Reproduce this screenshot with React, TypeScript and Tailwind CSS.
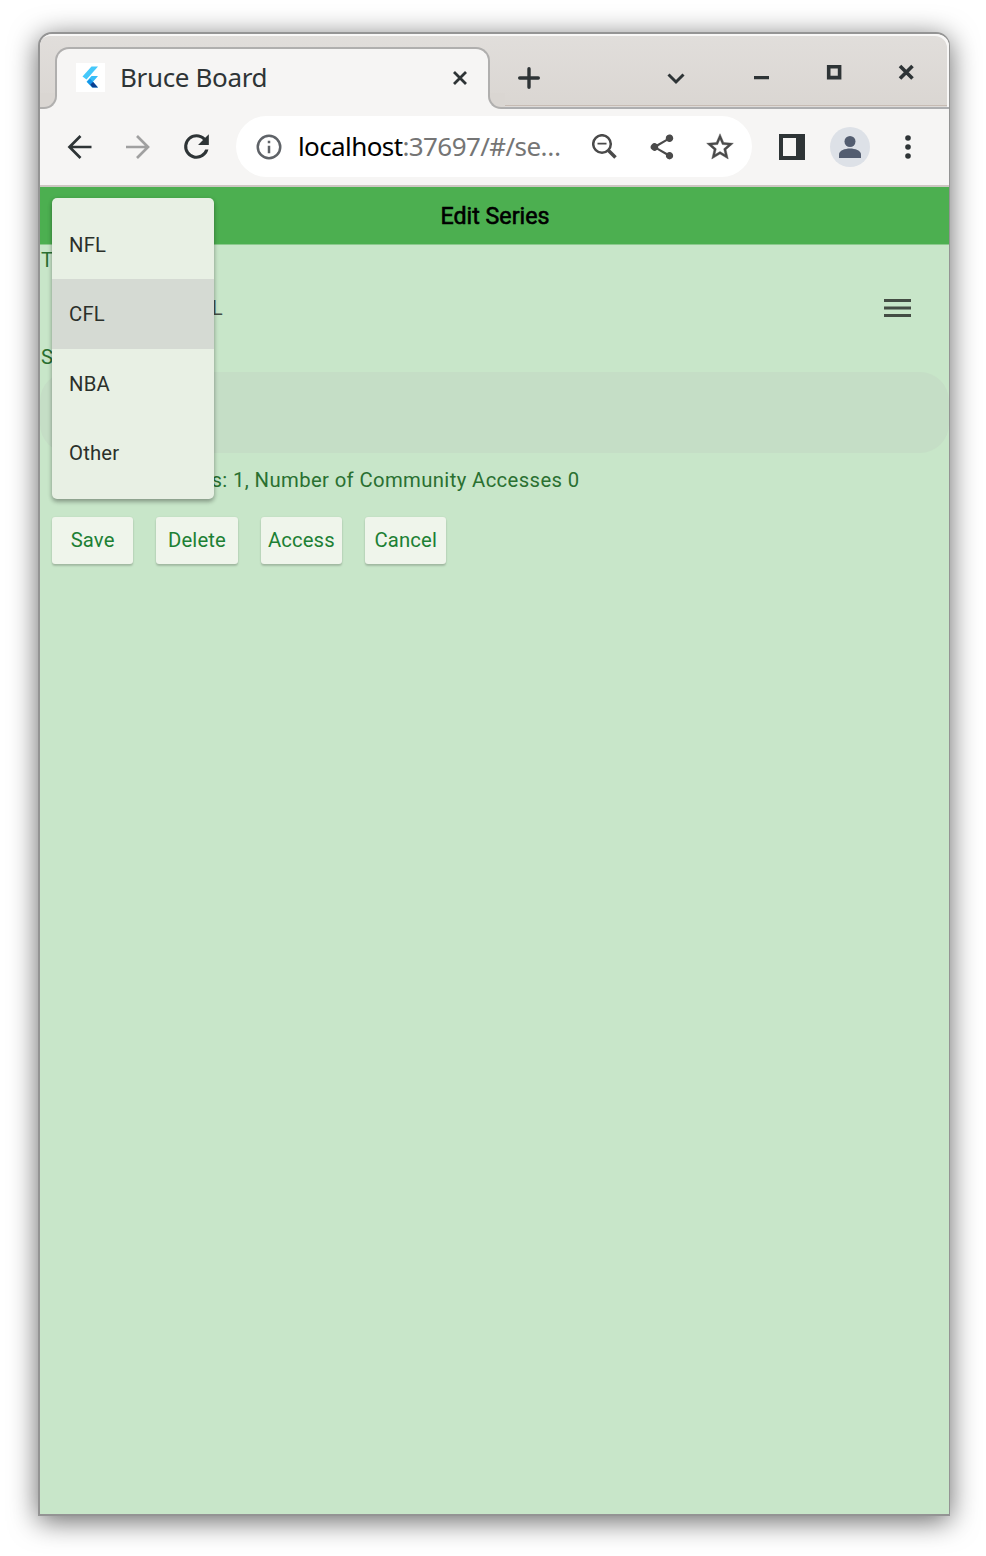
import type { ReactNode } from "react";

function Icon({ size, className, children }: { size: number; className?: string; children: ReactNode }) {
  return (
    <svg width={size} height={size} viewBox="0 0 24 24" fill="currentColor" className={`shrink-0 ${className ?? ""}`}>
      {children}
    </svg>
  );
}

function FlutterLogo() {
  return (
    <svg width="29" height="29" viewBox="0 0 29 29" className="shrink-0 bg-white">
      <path d="M15.500 3.500H22L10.500 16.500 6.500 13.500z" fill="#45c8fa" />
      <path d="M15.500 13H22L17 18.700 22 24.500H16L10.500 18.700z" fill="#38bdf8" />
      <path d="M14 21.500L17 18.700 22 24.500H16.500z" fill="#0b3f91" />
      <path d="M11 18.700l3-3 3 3-3 3z" fill="#1695e8" />
    </svg>
  );
}

function TabStrip() {
  return (
    <div className="relative flex h-[75px] shrink-0 items-start rounded-t-[12px] border-b-2 border-[#adaeb0] bg-linear-to-b from-[#e1dedb] to-[#dad6d2] pl-[15px] pt-[14px] text-[#2e3436] shadow-[inset_-2px_2px_0_#f8f7f6,inset_0_-1px_0_#dedad7,inset_0_-2px_0_#c6bbb3]">
      <div className="relative -mt-px flex h-[62px] w-[435px] shrink-0 items-center rounded-t-[14px] border-2 border-b-0 border-[#b0afae] bg-[#f6f5f4] pb-[3px] pl-[19px] pr-[18px]">
        <span className="absolute -left-[17px] bottom-0 h-[16px] w-[17px] bg-[#f6f5f4]">
          <span className="block h-full w-full rounded-br-[13px] border-b-2 border-r-2 border-[#b0afae] bg-[#dad6d2]" />
        </span>
        <span className="absolute -right-[17px] bottom-0 h-[16px] w-[17px] bg-[#f6f5f4]">
          <span className="block h-full w-full rounded-bl-[13px] border-b-2 border-l-2 border-[#b0afae] bg-[#dad6d2]" />
        </span>
        <FlutterLogo />
        <span className="ml-[15px] flex-1 whitespace-nowrap pb-[2px] text-[26px] leading-none tracking-[-0.35px]">Bruce Board</span>
        <svg width="20" height="20" viewBox="0 0 20 20" className="stroke-current">
          <path d="M4 4l12 12M16 4L4 16" strokeWidth="2.800" />
        </svg>
      </div>
      <svg width="24" height="24" viewBox="0 0 24 24" className="ml-[27px] mt-[18px] shrink-0 stroke-current">
        <path d="M12 2.700v18.600M2.700 12h18.600" strokeWidth="3.400" strokeLinecap="round" />
      </svg>
      <svg width="20" height="20" viewBox="0 0 20 20" fill="none" className="ml-[125px] mt-[20px] shrink-0 stroke-current">
        <path d="M2.500 6.500L10 14l7.500-7.500" strokeWidth="3" />
      </svg>
      <svg width="16" height="16" viewBox="0 0 16 16" className="ml-[67px] mt-[16px] shrink-0 fill-current">
        <path d="M1 12h15v3.200H1z" />
      </svg>
      <svg width="16" height="16" viewBox="0 0 16 16" fill="none" className="ml-[57px] mt-[16px] shrink-0 stroke-current">
        <path d="M2.700 2.700h10.900v10.900H2.700z" strokeWidth="3.600" />
      </svg>
      <svg width="16" height="16" viewBox="0 0 16 16" className="ml-[56px] mt-[16px] shrink-0 stroke-current">
        <path d="M2 2l12.500 12.500M14.500 2L2 14.500" strokeWidth="3.600" />
      </svg>
    </div>
  );
}

function Toolbar() {
  return (
    <div className="flex h-[78px] shrink-0 items-center border-b-2 border-[#cdc7c2] bg-[#f6f5f4] pb-px pl-[23px] text-[#2e3436]">
      <svg width="34" height="26" viewBox="0 0 34 26" fill="none" stroke="currentColor" strokeWidth="2.700" className="shrink-0">
        <path d="M28.500 13H7.500M17.500 2L6.500 13l11 11" />
      </svg>
      <svg width="34" height="26" viewBox="0 0 34 26" fill="none" stroke="currentColor" strokeWidth="2.700" className="ml-[24px] shrink-0 text-[#a0a0a0]">
        <path d="M5 13h21M16 2l11 11-11 11" />
      </svg>
      <Icon size={37} className="ml-[23px]">
        <path d="M17.65 6.35A7.96 7.96 0 0 0 12 4a8 8 0 1 0 7.730 10h-2.080A6 6 0 1 1 12 6c1.660 0 3.140.690 4.220 1.780L13 11h7V4z" />
      </Icon>
      <div className="ml-[21px] flex h-[61px] w-[516px] shrink-0 items-center rounded-full bg-white pl-[18px] text-[#4a4a4a]">
        <Icon size={30} className="text-[#5f6368]">
          <path d="M11 7h2v2h-2zm0 4h2v6h-2zm1-9a10 10 0 1 0 0 20 10 10 0 0 0 0-20zm0 18a8 8 0 1 1 0-16 8 8 0 0 1 0 16z" />
        </Icon>
        <span className="ml-[14px] w-[264px] shrink-0 whitespace-nowrap pb-px text-[26px] leading-none tracking-[-0.6px] text-[#757575]">
          <span className="text-black">localhost</span>:37697/#/se…
        </span>
        <svg width="25" height="25" viewBox="0 0 25 25" fill="none" stroke="currentColor" className="ml-[29.500px] shrink-0">
          <circle cx="10" cy="10" r="8.800" strokeWidth="2.500" />
          <path d="M5.500 9.700h9" strokeWidth="1.800" />
          <path d="M16.500 16.500l7 7" strokeWidth="3.600" />
        </svg>
        <Icon size={30} className="ml-[30.500px]">
          <path d="M18 16.080c-.760 0-1.440.300-1.960.770L8.910 12.700a3.270 3.270 0 0 0 0-1.400l7.050-4.110A3 3 0 1 0 15 5c0 .240.040.470.090.700L8.040 9.810a3 3 0 1 0 0 4.380l7.120 4.160A2.920 2.920 0 1 0 18 16.080z" />
        </Icon>
        <Icon size={32} className="ml-[27px]">
          <path
            stroke="currentColor"
            strokeWidth="0.300"
            d="M22 9.240l-7.190-.620L12 2 9.190 8.630 2 9.240l5.460 4.730L5.820 21 12 17.270 18.180 21l-1.630-7.030zM12 15.400l-3.760 2.270 1-4.280-3.320-2.880 4.380-.380L12 6.100l1.710 4.040 4.380.380-3.320 2.880 1 4.280z"
          />
        </Icon>
      </div>
      <svg width="26" height="26" viewBox="0 0 26 26" className="ml-[27px] shrink-0">
        <path d="M0 0h26v26H0zM4 4v18h13V4z" fillRule="evenodd" fill="currentColor" />
      </svg>
      <span className="ml-[25px] flex size-[40px] shrink-0 items-center justify-center rounded-full bg-[#dde1e7] text-[#535d70]">
        <svg width="22" height="22" viewBox="0 0 22 22" fill="currentColor">
          <circle cx="11" cy="5.500" r="5.500" />
          <path d="M0 22v-3.500c0-4 6-6 11-6s11 2 11 6V22z" />
        </svg>
      </span>
      <svg width="6" height="24" viewBox="0 0 6 24" fill="currentColor" className="ml-[35px] shrink-0">
        <circle cx="3" cy="3" r="2.800" />
        <circle cx="3" cy="12" r="2.800" />
        <circle cx="3" cy="21" r="2.800" />
      </svg>
    </div>
  );
}

const options = ["NFL", "CFL", "NBA", "Other"];
const actions = ["Save", "Delete", "Access", "Cancel"];

function SeriesPage() {
  return (
    <div className="relative flex min-h-0 flex-1 flex-col bg-[#c8e6c9] font-['Roboto',sans-serif] text-[20.3px] text-[#2a7031]">
      <header className="flex h-[58px] shrink-0 items-center justify-center border-b border-[#8bca8d] bg-[#4caf50] pl-px pt-[2px] text-[23.200px] text-black [-webkit-text-stroke:0.6px_black]">
        Edit Series
      </header>
      <div className="flex h-[29px] items-center pl-px pt-[2px] tracking-[0.36px]">Type</div>
      <div className="flex h-[68px] items-center justify-between pl-[146px] pr-[38px] text-[#444d44]">
        <span>NFL</span>
        <svg width="27" height="18" viewBox="0 0 27 18" fill="currentColor">
          <path d="M0 .100h27v2.800H0zM0 7.600h27v2.800H0zM0 15.100h27v2.800H0z" />
        </svg>
      </div>
      <div className="flex h-[30px] items-center pl-px pt-px tracking-[0.36px]">Series Name</div>
      <div className="h-[81px] shrink-0 rounded-[29px] bg-[#c5dec6]" />
      <div className="flex h-[52px] items-center whitespace-nowrap pl-[19.500px] pt-[2px] tracking-[0.37px]">
        Number of Series: 1, Number of Community Accesses 0
      </div>
      <div className="flex gap-[23.200px] pl-[12px] pt-[12px]">
        {actions.map((label) => (
          <button
            key={label}
            className="flex h-[46.500px] w-[81.200px] items-center justify-center rounded-[3px] bg-[#eff5eb] tracking-[0.12px] text-[#1c8034] shadow-[0_2px_2px_rgba(0,0,0,0.18),0_0_2px_rgba(0,0,0,0.08)]"
          >
            {label}
          </button>
        ))}
      </div>
      <ul className="absolute left-[12px] top-[11px] h-[301px] w-[162px] rounded-[5px] bg-[#e8f0e4] py-[11.500px] text-[#2b302b] shadow-[0_3px_4px_rgba(0,0,0,0.26),0_1px_5px_rgba(0,0,0,0.14)]">
        {options.map((name) => (
          <li key={name} className={`flex h-[69.600px] items-center pl-[17px] pt-px tracking-[0.2px] ${name === "CFL" ? "bg-[#d5dad3]" : ""}`}>
            {name}
          </li>
        ))}
      </ul>
    </div>
  );
}

export default function App() {
  return (
    <div className="h-[1556px] w-[986px] overflow-hidden bg-white pl-[38px] pt-[32px] font-['Noto_Sans',sans-serif]">
      <div className="flex h-[1484px] w-[912px] flex-col overflow-hidden rounded-t-[14px] border-2 border-r-1 border-[#949494] bg-[#f6f5f4] shadow-[0_5px_28px_rgba(0,0,0,0.6)]">
        <TabStrip />
        <Toolbar />
        <SeriesPage />
      </div>
    </div>
  );
}
